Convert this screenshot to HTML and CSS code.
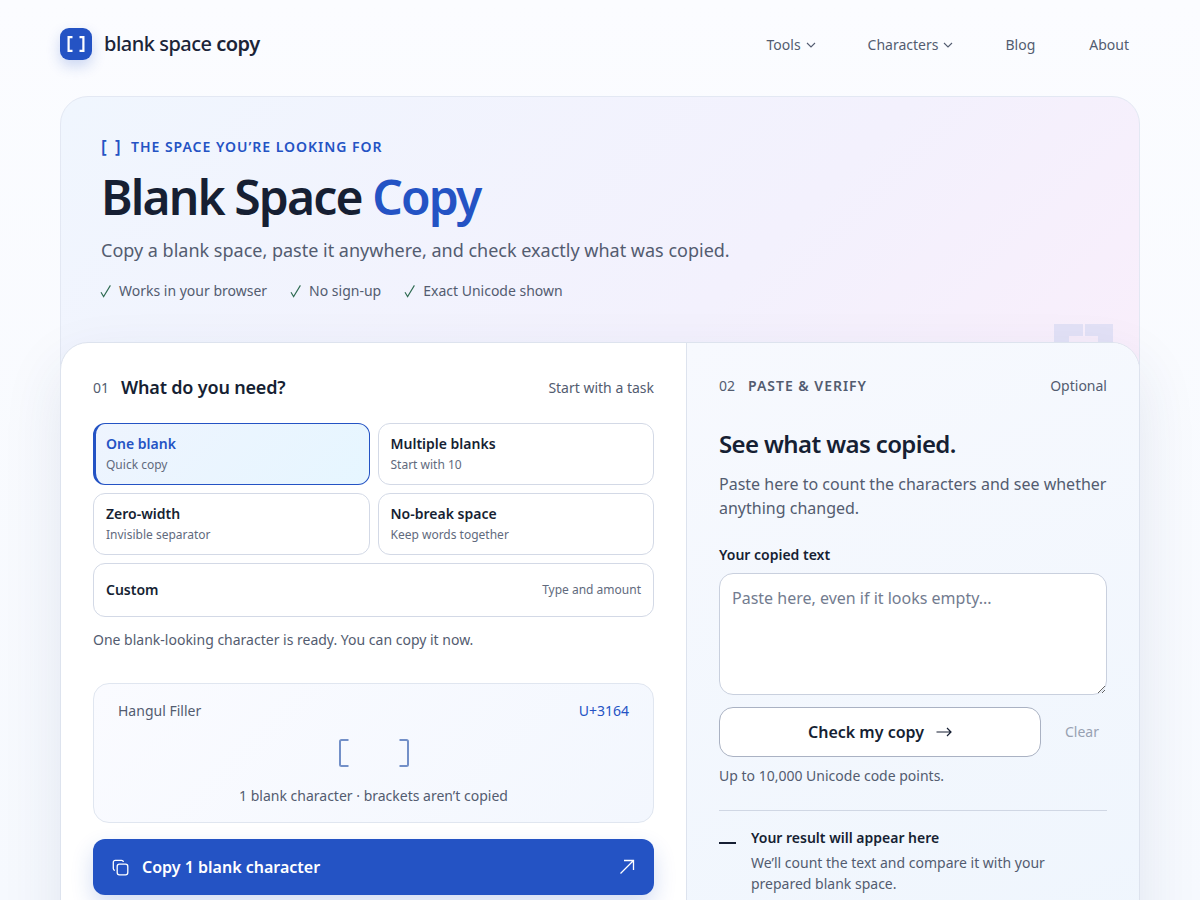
FILE: index.html
```html
<!DOCTYPE html>
<html lang="en">
<head>
<meta charset="utf-8">
<title>Blank Space Copy</title>
<link rel="stylesheet" href="styles.css">
</head>
<body>
<div class="page">
  <header class="nav">
    <a class="brand">
      <span class="logo"><svg width="32" height="32" viewBox="0 0 32 32" fill="none" stroke="#fff" stroke-width="2.2"><path d="M12.5 9.1H8.6V22.9H12.5"/><path d="M19.5 9.1H23.4V22.9H19.5"/></svg></span>
      <span class="brand-name">blank space <b>copy</b></span>
    </a>
    <nav class="links">
      <a class="link">Tools <svg class="chev" width="10" height="6" viewBox="0 0 10 6" fill="none" stroke="currentColor" stroke-width="1.1"><path d="M1 1l4 4 4-4"/></svg></a>
      <a class="link">Characters <svg class="chev" width="10" height="6" viewBox="0 0 10 6" fill="none" stroke="currentColor" stroke-width="1.1"><path d="M1 1l4 4 4-4"/></svg></a>
      <a class="link">Blog</a>
      <a class="link">About</a>
    </nav>
  </header>

  <section class="hero">
    <p class="eyebrow"><span class="eb-mark">[ ]</span>THE SPACE YOU’RE LOOKING FOR</p>
    <h1>Blank Space <span>Copy</span></h1>
    <p class="lead">Copy a blank space, paste it anywhere, and check exactly what was copied.</p>
    <ul class="checks">
      <li><svg class="tick" width="12" height="14" viewBox="0 0 12 14" fill="none" stroke="#2f6b52" stroke-width="1.1"><path d="M1 8.2L3.6 12.6L10.4 1.4"/></svg>Works in your browser</li>
      <li><svg class="tick" width="12" height="14" viewBox="0 0 12 14" fill="none" stroke="#2f6b52" stroke-width="1.1"><path d="M1 8.2L3.6 12.6L10.4 1.4"/></svg>No sign-up</li>
      <li><svg class="tick" width="12" height="14" viewBox="0 0 12 14" fill="none" stroke="#2f6b52" stroke-width="1.1"><path d="M1 8.2L3.6 12.6L10.4 1.4"/></svg>Exact Unicode shown</li>
    </ul>
    <div class="deco"><span></span><span></span></div>
  </section>

  <main class="tool">
    <section class="left">
      <div class="head">
        <div class="head-l"><span class="num">01</span><h2>What do you need?</h2></div>
        <span class="hint">Start with a task</span>
      </div>
      <div class="options">
        <button class="opt active"><b>One blank</b><small>Quick copy</small></button>
        <button class="opt"><b>Multiple blanks</b><small>Start with 10</small></button>
        <button class="opt"><b>Zero-width</b><small>Invisible separator</small></button>
        <button class="opt"><b>No-break space</b><small>Keep words together</small></button>
        <button class="opt wide"><b>Custom</b><small>Type and amount</small></button>
      </div>
      <p class="status">One blank-looking character is ready. You can copy it now.</p>
      <div class="preview">
        <div class="prev-top"><span>Hangul Filler</span><span class="code">U+3164</span></div>
        <div class="brackets"><svg width="70" height="28" viewBox="0 0 70 28" fill="none" stroke="#7390c8" stroke-width="2"><path d="M9.5 1H2.5A1.5 1.5 0 0 0 1 2.5V25.5A1.5 1.5 0 0 0 2.5 27H9.5"/><path d="M60.5 1H67.5A1.5 1.5 0 0 1 69 2.5V25.5A1.5 1.5 0 0 1 67.5 27H60.5"/></svg></div>
        <p class="prev-note">1 blank character · brackets aren’t copied</p>
      </div>
      <button class="copy">
        <svg width="17" height="17" viewBox="0 0 17 17" fill="none" stroke="#fff" stroke-width="1.3"><rect x="5.2" y="5.2" width="10.6" height="10.6" rx="2.2"/><path d="M3 11.4A1.9 1.9 0 0 1 1.3 9.5V3.2A1.9 1.9 0 0 1 3.2 1.3H9.5A1.9 1.9 0 0 1 11.4 3"/></svg>
        <span class="copy-text">Copy 1 blank character</span>
        <svg width="16" height="16" viewBox="0 0 16 16" fill="none" stroke="#fff" stroke-width="1.3"><path d="M1.5 14.5L14.5 1.5M5 1.5H14.5V11"/></svg>
      </button>
    </section>

    <section class="right">
      <div class="head head-r">
        <div class="head-l"><span class="num">02</span><span class="label">PASTE &amp; VERIFY</span></div>
        <span class="hint">Optional</span>
      </div>
      <h3>See what was copied.</h3>
      <p class="desc">Paste here to count the characters and see whether anything changed.</p>
      <label class="field-label" for="paste">Your copied text</label>
      <textarea id="paste" class="area" placeholder="Paste here, even if it looks empty..."></textarea>
      <div class="actions">
        <button class="check">Check my copy <svg width="16" height="10" viewBox="0 0 16 10" fill="none" stroke="#161f33" stroke-width="1.2"><path d="M0.5 5H15M11 1l4 4-4 4"/></svg></button>
        <button class="clear">Clear</button>
      </div>
      <p class="limit">Up to 10,000 Unicode code points.</p>
      <div class="result">
        <span class="dash"></span>
        <div>
          <strong>Your result will appear here</strong>
          <p>We’ll count the text and compare it with your prepared blank space.</p>
        </div>
      </div>
    </section>
  </main>
</div>
</body>
</html>
```
FILE: styles.css
```css
* { box-sizing: border-box; }
html, body { margin: 0; height: 900px; overflow: hidden; }
body {
  font-family: "Noto Sans", sans-serif;
  color: #161f33;
  background: linear-gradient(180deg, #fbfcff 0%, #f6f9fe 100%);
}
p, h1, h2, h3, ul { margin: 0; padding: 0; }
button { font-family: inherit; cursor: pointer; }
.page { width: 1080px; margin: 0 auto; }

.nav { height: 96px; padding-bottom: 8px; display: flex; align-items: center; justify-content: space-between; }
.brand { display: flex; align-items: center; gap: 12px; }
.logo { width: 32px; height: 32px; border-radius: 9px; background: #2453c4; box-shadow: 0 6px 14px rgba(36,83,196,.22); display: block; }
.logo svg { display: block; }
.brand-name { font-size: 20px; font-weight: 500; letter-spacing: -.5px; color: #1b2438; padding-bottom: 2px; }
.brand-name b { font-weight: 600; }
.links { display: flex; gap: 54px; padding-right: 11px; }
.link { font-size: 14px; color: #535c70; display: flex; align-items: center; gap: 5px; }
.chev { margin-top: 1px; margin-right: -2px; }

.hero {
  position: relative;
  height: 300px;
  padding: 39px 40px 0;
  border: 1px solid #e3e8f3;
  border-radius: 28px;
  background: linear-gradient(135deg, #f0f6fe 0%, #f3f1fd 62%, #f9eefb 100%);
}
.eyebrow { font-size: 14px; font-weight: 600; letter-spacing: .98px; color: #2453c4; line-height: 22px; display: flex; }
.eb-mark { width: 30px; letter-spacing: 2px; font-size: 17px; }
h1 { font-size: 48px; line-height: 60px; font-weight: 600; letter-spacing: -1.88px; margin-top: 9px; color: #161f33; }
h1 span { color: #2453c4; }
.lead { font-size: 18px; line-height: 28px; color: #535c70; margin-top: 9px; }
.checks { list-style: none; display: flex; gap: 24px; margin-top: 15px; font-size: 14px; line-height: 24px; color: #535c70; }
.checks li { display: flex; align-items: center; }
.tick { margin-left: -1px; margin-right: 7px; }
.deco { position: absolute; right: 26px; top: 227px; display: flex; gap: 2px; }
.deco span { width: 28.5px; height: 30px; background: #e2e1f6; }
.deco::after { content: ""; position: absolute; left: 15px; right: 15px; top: 12px; height: 18px; background: #f6ecfa; }

.tool {
  position: relative;
  margin-top: -54px;
  height: 700px;
  display: grid;
  grid-template-columns: 625px 1fr;
  background: #fff;
  border: 1px solid #dde3ee;
  border-radius: 28px;
  box-shadow: 0 24px 60px rgba(40,60,110,.10);
  overflow: hidden;
}
.left { padding: 30px 32px 0; }
.right { padding: 31px 32px 0; border-left: 1px solid #dde3ee; background: linear-gradient(160deg, #f7f9fe 0%, #eef5fd 100%); }
.head { display: flex; justify-content: space-between; align-items: center; height: 28px; }
.head-l { display: flex; align-items: center; gap: 12px; }
.num { font-size: 14px; color: #535c70; }
h2 { font-size: 18px; font-weight: 600; line-height: 28px; letter-spacing: -.18px; }
.hint { font-size: 14px; color: #535c70; }
.label { font-size: 14px; font-weight: 600; letter-spacing: .98px; color: #535c70; margin-left: 1px; }
.head-r { height: 22px; margin-bottom: 0; }

.options { display: grid; grid-template-columns: 1fr 1fr; gap: 8px; margin-top: 22px; }
.opt {
  height: 62px; padding: 10px 12px 0; text-align: left;
  background: #fff; border: 1px solid #d3d9e6; border-radius: 12px;
  display: flex; flex-direction: column; justify-content: flex-start; color: #161f33;
}
.opt b { font-size: 14px; line-height: 20px; font-weight: 600; }
.opt small { font-size: 12px; line-height: 22px; color: #616a7d; }
.opt.active { border-color: #2453c4; border-left-width: 3px; padding-left: 10px; background: linear-gradient(135deg, #eef4fe 0%, #e6f6ff 100%); }
.opt.active b { color: #2453c4; }
.opt.wide { grid-column: 1 / -1; height: 54px; padding-top: 0; flex-direction: row; justify-content: space-between; align-items: center; }

.status { font-size: 14px; line-height: 22px; color: #535c70; margin-top: 12px; }
.preview { margin-top: 32px; height: 140px; padding: 17px 24px 0; border: 1px solid #e0e6f0; border-radius: 16px; background: linear-gradient(135deg, #fafbff 0%, #f3f7fe 100%); }
.prev-top { display: flex; justify-content: space-between; font-size: 14px; line-height: 20px; color: #535c70; }
.code { color: #2453c4; }
.brackets { display: flex; justify-content: center; margin-top: 18px; height: 28px; }
.brackets svg { display: block; }
.prev-note { text-align: center; font-size: 14px; line-height: 22px; color: #535c70; margin-top: 18px; }
.copy {
  margin-top: 16px; width: 100%; height: 56px; border: 0; border-radius: 12px; background: #2453c4; color: #fff;
  padding: 0 19px; display: flex; align-items: center; box-shadow: 0 10px 22px rgba(36,83,196,.2);
}
.copy-text { flex: 1; text-align: left; font-size: 16px; font-weight: 600; margin-left: 13px; }

h3 { font-size: 24px; line-height: 30px; font-weight: 600; letter-spacing: -.62px; margin-top: 33px; }
.desc { font-size: 16px; line-height: 24px; color: #535c70; margin-top: 13px; }
.field-label { display: block; font-size: 14px; font-weight: 600; line-height: 20px; margin-top: 25px; color: #161f33; }
.area {
  display: block; width: 100%; height: 122px; margin-top: 8px; padding: 12px;
  border: 1px solid #c9d0de; border-radius: 14px; background: #fff; font: 16px/24px "Noto Sans", sans-serif;
  color: #161f33; resize: vertical; outline: none;
}
.area::placeholder { color: #737c8f; }
.actions { display: flex; align-items: center; margin-top: 12px; }
.check {
  width: 322px; height: 50px; background: #fff; border: 1px solid #aab2c3; border-radius: 14px;
  font-size: 16px; font-weight: 600; color: #161f33; display: flex; align-items: center; justify-content: center; gap: 12px;
}
.clear { flex: 1; height: 50px; background: none; border: 0; font-size: 14px; color: #98a1b2; padding: 0 0 2px 16px; text-align: center; }
.limit { font-size: 14px; line-height: 22px; color: #535c70; margin-top: 8px; }
.result { margin-top: 23px; padding-top: 16px; border-top: 1px solid #d0d7e4; display: flex; gap: 15px; }
.dash { width: 17px; height: 1.5px; background: #161f33; margin-top: 15px; flex: none; }
.result strong { display: block; font-size: 14px; font-weight: 600; line-height: 22px; }
.result p { font-size: 14px; line-height: 21px; color: #535c70; margin-top: 3px; }
```
